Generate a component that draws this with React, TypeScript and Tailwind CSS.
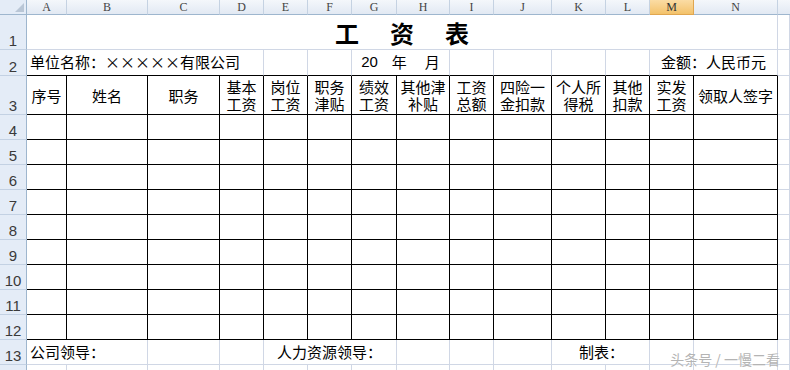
import React from 'react';

const GRID =
  'grid grid-cols-[27px_40px_81px_72px_44px_44px_44px_45px_53px_44px_58px_54px_44px_44px_84px_1fr]';

const LETTERS = ['A', 'B', 'C', 'D', 'E', 'F', 'G', 'H', 'I', 'J', 'K', 'L', 'M', 'N'];

const HEADERS: string[] = [
  '序号',
  '姓名',
  '职务',
  '基本\n工资',
  '岗位\n工资',
  '职务\n津贴',
  '绩效\n工资',
  '其他津\n补贴',
  '工资\n总额',
  '四险一\n金扣款',
  '个人所\n得税',
  '其他\n扣款',
  '实发\n工资',
  '领取人签字',
];

const gray = 'border-r border-b border-[#d0d7e5]';
const black = 'border-r border-b border-black';

function RowHead({ n }: { n?: number }) {
  return (
    <div className="flex items-end justify-center bg-[#e4ecf7] border-r border-r-[#9eb6ce] border-b border-b-[#c3d1e3] pb-[1px] font-['Liberation_Sans',sans-serif] text-[15px] leading-none text-[#3a3a3a]">
      {n}
    </div>
  );
}

function ColHeads() {
  return (
    <div className={`${GRID} h-[15px]`}>
      <div className="relative bg-[#e4ecf7] border-r border-b border-[#9eb6ce]">
        <div className="absolute right-[2px] bottom-[2px] w-0 h-0 border-l-[9px] border-l-transparent border-b-[9px] border-b-[#b9c6d6]" />
      </div>
      {LETTERS.map((l) => (
        <div
          key={l}
          className={`flex items-center justify-center border-r border-b font-['Liberation_Serif',serif] text-[12px] leading-none ${
            l === 'M'
              ? 'bg-gradient-to-b from-[#fbdca4] to-[#f3c26a] border-r-[#e0a650] border-b-[#e0a650] text-[#333]'
              : 'bg-gradient-to-b from-[#f4f7fb] to-[#e2e9f3] border-r-[#c5d2e2] border-b-[#9eb6ce] text-[#444]'
          }`}
        >
          {l}
        </div>
      ))}
      <div className="bg-gradient-to-b from-[#f4f7fb] to-[#e2e9f3] border-b border-[#9eb6ce]" />
    </div>
  );
}

export default function App() {
  return (
    <div className="relative w-[790px] h-[370px] overflow-hidden bg-white font-['Noto_Sans_CJK_SC',sans-serif] text-[15px] text-black">
      <ColHeads />

      {/* row 1: title */}
      <div className={`${GRID} h-[35px]`}>
        <RowHead n={1} />
        <div className={`col-span-14 flex items-center justify-center gap-[31px] pt-[1px] text-[24px] font-bold leading-none ${gray}`}>
          <span>工</span>
          <span>资</span>
          <span>表</span>
        </div>
        <div className={gray} />
      </div>

      {/* row 2 */}
      <div className={`${GRID} h-[26px]`}>
        <RowHead n={2} />
        <div className="col-span-4 flex items-center pl-[3px] border-r border-r-[#d0d7e5] border-b border-b-black whitespace-nowrap">
          单位名称：×××××有限公司
        </div>
        <div className="border-r border-r-[#d0d7e5] border-b border-b-black" />
        <div className="border-r border-r-[#d0d7e5] border-b border-b-black" />
        <div className="col-span-2 flex items-center justify-center border-r border-r-[#d0d7e5] border-b border-b-black whitespace-nowrap">
          <span className="font-['Liberation_Sans',sans-serif]">20</span>
          <span className="ml-[14px]">年</span>
          <span className="ml-[18px]">月</span>
        </div>
        <div className="border-r border-r-[#d0d7e5] border-b border-b-black" />
        <div className="border-r border-r-[#d0d7e5] border-b border-b-black" />
        <div className="border-r border-r-[#d0d7e5] border-b border-b-black" />
        <div className="border-r border-r-[#d0d7e5] border-b border-b-black" />
        <div className="col-span-2 flex items-center justify-center border-r border-r-[#d0d7e5] border-b border-b-black whitespace-nowrap">
          金额：人民币元
        </div>
        <div className={gray} />
      </div>

      {/* row 3: column titles */}
      <div className={`${GRID} h-[39px]`}>
        <RowHead n={3} />
        {HEADERS.map((h) => (
          <div key={h} className={`flex items-center justify-center ${black}`}>
            <div className="text-center leading-[17px] whitespace-pre">{h}</div>
          </div>
        ))}
        <div className={gray} />
      </div>

      {/* rows 4-12 */}
      {[4, 5, 6, 7, 8, 9, 10, 11, 12].map((n) => (
        <div key={n} className={`${GRID} h-[25px]`}>
          <RowHead n={n} />
          {LETTERS.map((l) => (
            <div key={l} className={black} />
          ))}
          <div className={gray} />
        </div>
      ))}

      {/* row 13: signatures */}
      <div className={`${GRID} h-[25px]`}>
        <RowHead n={13} />
        <div className={`col-span-2 flex items-center pl-[3px] whitespace-nowrap ${gray}`}>公司领导：</div>
        <div className={gray} />
        <div className={gray} />
        <div className={`col-span-3 flex items-center pl-[13px] whitespace-nowrap ${gray}`}>人力资源领导：</div>
        <div className={gray} />
        <div className={gray} />
        <div className={gray} />
        <div className={`col-span-2 flex items-center pl-[27px] whitespace-nowrap ${gray}`}>制表：</div>
        <div className={gray} />
        <div className={gray} />
        <div className={gray} />
      </div>

      {/* row 14, only its top edge shows */}
      <div className={`${GRID} h-[25px]`}>
        <RowHead />
        {LETTERS.map((l) => (
          <div key={l} className={gray} />
        ))}
        <div className={gray} />
      </div>

      <div className="absolute right-[10px] bottom-[4px] text-[14px] leading-none text-[#b4b4b4] [text-shadow:0_0_1px_#ffffff] whitespace-nowrap">
        头条号 / 一慢二看
      </div>
    </div>
  );
}
